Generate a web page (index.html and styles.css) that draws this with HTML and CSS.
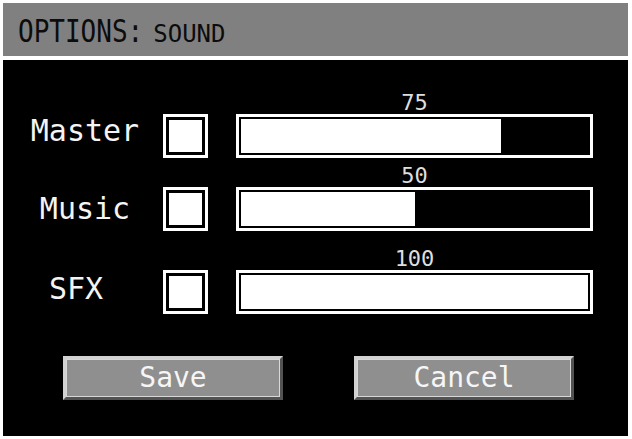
FILE: index.html
```html
<!DOCTYPE html>
<html lang="en">
<head>
<meta charset="utf-8">
<title>Options: Sound</title>
<link rel="stylesheet" href="styles.css">
</head>
<body>
<div class="app">
  <header class="titlebar">
    <span class="title-main">OPTIONS:</span>
    <span class="title-sub">SOUND</span>
  </header>
  <main class="panel">
    <div class="row">
      <div class="label label--master">Master</div>
      <div class="check"></div>
      <div class="meter">
        <div class="value">75</div>
        <div class="bar"><div class="bar-fill" style="width:75%"></div></div>
      </div>
    </div>
    <div class="row row--second">
      <div class="label">Music</div>
      <div class="check"></div>
      <div class="meter">
        <div class="value">50</div>
        <div class="bar"><div class="bar-fill" style="width:50%"></div></div>
      </div>
    </div>
    <div class="row row--third">
      <div class="label label--sfx">SFX</div>
      <div class="check"></div>
      <div class="meter">
        <div class="value">100</div>
        <div class="bar"><div class="bar-fill" style="width:100%"></div></div>
      </div>
    </div>
    <div class="actions">
      <button class="btn">Save</button>
      <button class="btn">Cancel</button>
    </div>
  </main>
</div>
</body>
</html>
```
FILE: styles.css
```css
html, body {
  background: #ffffff;
}
body {
  margin: 3px 4px 3px 3px;
  font-family: "DejaVu Sans Mono", "Liberation Mono", monospace;
}
.app {
  display: flex;
  flex-direction: column;
  gap: 4px;
  height: 433px;
}
.titlebar {
  height: 53px;
  box-sizing: border-box;
  background: #808080;
  display: flex;
  align-items: baseline;
  padding: 17px 0 0 15px;
  color: #0c0c0c;
}
.title-main {
  display: inline-block;
  font-size: 26px;
  line-height: 26px;
  transform: scaleY(1.2);
  transform-origin: 0 22px;
}
.title-sub {
  font-size: 24px;
  line-height: 26px;
  margin-left: 10px;
}
.panel {
  flex: 1;
  background: #000000;
  padding-top: 32px;
  display: flex;
  flex-direction: column;
}
.row {
  display: grid;
  grid-template-columns: 160px 45px 385px;
  align-items: end;
}
.row--second {
  margin-top: 7px;
}
.row--third {
  margin-top: 17px;
}
.label {
  height: 44px;
  padding-left: 4px;
  font-size: 30px;
  line-height: 44px;
  color: #f4f4f4;
  text-align: center;
  overflow: hidden;
}
.label--master {
  line-height: 33px;
}
.label--sfx {
  line-height: 37px;
  padding-right: 18px;
}
.check {
  width: 45px;
  height: 44px;
  box-sizing: border-box;
  border: 3px solid #ffffff;
  background: #ffffff;
  box-shadow: inset 0 0 0 3px #000000;
}
.meter {
  margin-left: 28px;
  display: flex;
  flex-direction: column;
}
.value {
  font-size: 22px;
  line-height: 22px;
  color: #dedede;
  text-align: center;
}
.bar {
  height: 44px;
  box-sizing: border-box;
  border: 3px solid #ffffff;
  padding: 2px;
  background: #000000;
}
.bar-fill {
  height: 100%;
  background: #ffffff;
}
.actions {
  display: flex;
  gap: 71px;
  padding-left: 60px;
  margin-top: 42px;
}
.btn {
  width: 220px;
  height: 44px;
  box-sizing: border-box;
  margin: 0;
  padding: 0;
  background: #8f8f8f;
  border: 3px solid;
  border-color: #d2d2d2 #525252 #525252 #d2d2d2;
  box-shadow: inset 0 0 0 1px #d8d8d8;
  color: #f6f6f6;
  font-family: "DejaVu Sans Mono", "Liberation Mono", monospace;
  font-size: 28px;
  line-height: 28px;
  display: flex;
  align-items: center;
  justify-content: center;
}
```
